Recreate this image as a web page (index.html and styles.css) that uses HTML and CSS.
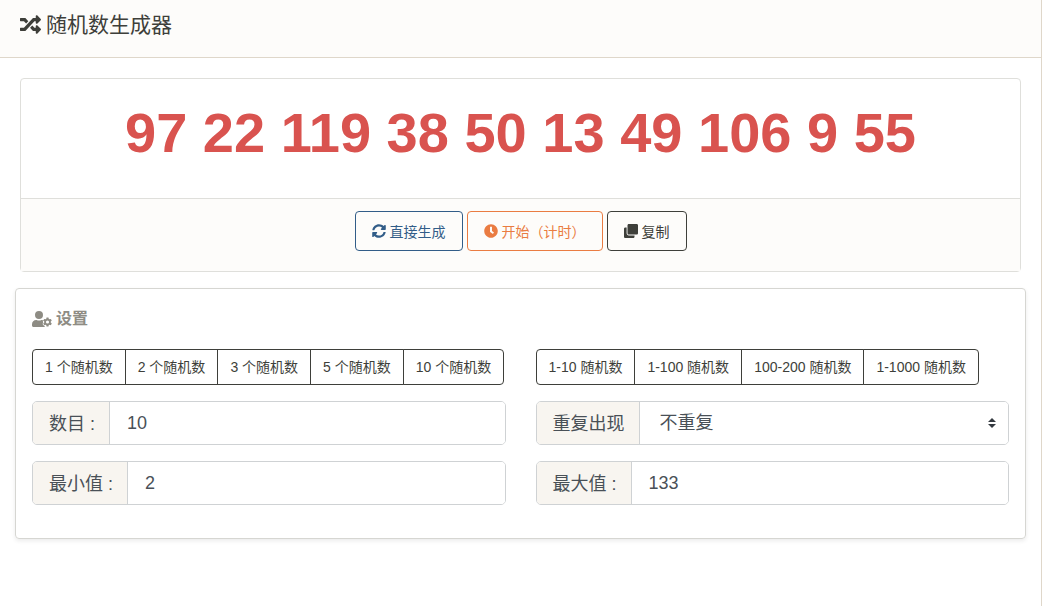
FILE: index.html
```html
<!DOCTYPE html>
<html lang="zh-CN">
<head>
    <meta charset="UTF-8">
    <meta name="viewport" content="width=device-width, initial-scale=1.0">
    <title>随机数生成器</title>
    <link rel="stylesheet" href="styles.css">
</head>
<body>
    <main class="panel">
        <h1 class="panel-header">
            <svg class="icon" viewBox="0 0 512 512" aria-hidden="true"><path d="M504.971 359.029c9.373 9.373 9.373 24.569 0 33.941l-80 79.984c-15.01 15.01-40.971 4.49-40.971-16.971V416h-58.785a12.004 12.004 0 0 1-8.773-3.812l-70.556-75.596 53.333-57.143L352 336h32v-39.981c0-21.438 25.943-31.998 40.971-16.971l80 79.981zM12 176h84l52.781 56.551 53.333-57.143-70.556-75.596A11.999 11.999 0 0 0 122.785 96H12c-6.627 0-12 5.373-12 12v56c0 6.627 5.373 12 12 12zm372 0v39.984c0 21.46 25.961 31.98 40.971 16.971l80-79.984c9.373-9.373 9.373-24.569 0-33.941l-80-79.981C409.943 24.021 384 34.582 384 56.019V96h-58.785a12.004 12.004 0 0 0-8.773 3.812L96 336H12c-6.627 0-12 5.373-12 12v56c0 6.627 5.373 12 12 12h110.785c3.326 0 6.503-1.381 8.773-3.812L352 176h32z"/></svg>
            随机数生成器
        </h1>

        <section class="result">
            <div class="numbers" id="numbers">97 22 119 38 50 13 49 106 9 55</div>
            <div class="actions">
                <button type="button" class="btn btn-primary">
                    <svg class="icon" viewBox="0 0 512 512" aria-hidden="true"><path d="M370.72 133.28C339.458 104.008 298.888 87.962 255.848 88c-77.458.068-144.328 53.178-162.791 126.85-1.344 5.363-6.122 9.15-11.651 9.15H24.103c-7.498 0-13.194-6.807-11.807-14.176C33.933 94.924 134.813 8 256 8c66.448 0 126.791 26.136 171.315 68.685L463.03 40.97C478.149 25.851 504 36.559 504 57.941V192c0 13.255-10.745 24-24 24H345.941c-21.382 0-32.09-25.851-16.971-40.971l41.75-41.749zM32 296h134.059c21.382 0 32.09 25.851 16.971 40.971l-41.75 41.75c31.262 29.273 71.835 45.319 114.876 45.28 77.418-.07 144.315-53.144 162.787-126.849 1.344-5.363 6.122-9.15 11.651-9.15h57.304c7.498 0 13.194 6.807 11.807 14.176C478.067 417.076 377.187 504 256 504c-66.448 0-126.791-26.136-171.315-68.685L48.97 471.03C33.851 486.149 8 475.441 8 454.059V320c0-13.255 10.745-24 24-24z"/></svg>
                    直接生成
                </button>
                <button type="button" class="btn btn-warning">
                    <svg class="icon" viewBox="0 0 512 512" aria-hidden="true"><path d="M256 8C119 8 8 119 8 256s111 248 248 248 248-111 248-248S393 8 256 8zm57.1 350.1L224.9 294c-3.1-2.3-4.9-5.9-4.9-9.7V116c0-6.6 5.4-12 12-12h48c6.6 0 12 5.4 12 12v137.7l63.5 46.2c5.4 3.9 6.5 11.4 2.6 16.8l-28.2 38.8c-3.9 5.3-11.4 6.5-16.8 2.6z"/></svg>
                    开始（计时）
                </button>
                <button type="button" class="btn btn-dark">
                    <svg class="icon" viewBox="0 0 512 512" aria-hidden="true"><path d="M464 0c26.51 0 48 21.49 48 48v288c0 26.51-21.49 48-48 48H176c-26.51 0-48-21.49-48-48V48c0-26.51 21.49-48 48-48h288M176 416c-44.112 0-80-35.888-80-80V128H48c-26.51 0-48 21.49-48 48v288c0 26.51 21.49 48 48 48h288c26.51 0 48-21.49 48-48v-48H176z"/></svg>
                    复制
                </button>
            </div>
        </section>

        <section class="settings">
            <h2 class="settings-title">
                <svg class="icon icon-wide" viewBox="0 0 640 512" aria-hidden="true"><path fill-rule="evenodd" d="M224 256a128 128 0 1 0 0-256 128 128 0 0 0 0 256zM314 288h-13a174 174 0 0 1-154 0h-13C60 288 0 348 0 422v42c0 27 21 48 48 48h370c-12-7-18-21-16-36l-34-20c-24-14-34-45-17-73l7-14c-18-22-10-50 12-64-12-10-34-17-56-17zM465 208h62l8 43 26 15 41-14 31 53-33 29v36l33 29-31 53-41-14-26 15-8 43h-62l-8-43-26-15-41 14-31-53 33-29v-36l-33-29 31-53 41 14 26-15zM496 302a50 50 0 1 0 0 100 50 50 0 0 0 0-100z"/></svg>
                设置
            </h2>
            <form class="form-grid">
                <div class="btn-group">
                    <button type="button">1 个随机数</button>
                    <button type="button">2 个随机数</button>
                    <button type="button">3 个随机数</button>
                    <button type="button">5 个随机数</button>
                    <button type="button">10 个随机数</button>
                </div>
                <div class="btn-group">
                    <button type="button">1-10 随机数</button>
                    <button type="button">1-100 随机数</button>
                    <button type="button">100-200 随机数</button>
                    <button type="button">1-1000 随机数</button>
                </div>
                <div class="input-group">
                    <label for="count">数目 :</label>
                    <input type="text" id="count" value="10">
                </div>
                <div class="input-group">
                    <label for="repeat">重复出现</label>
                    <div class="select-wrap">
                        <select id="repeat">
                            <option selected>不重复</option>
                            <option>重复</option>
                        </select>
                        <svg class="select-arrow" viewBox="0 0 8 10" aria-hidden="true"><path d="M4 0L0 4h8zM4 10L0 6h8z"/></svg>
                    </div>
                </div>
                <div class="input-group">
                    <label for="min">最小值 :</label>
                    <input type="text" id="min" value="2">
                </div>
                <div class="input-group">
                    <label for="max">最大值 :</label>
                    <input type="text" id="max" value="133">
                </div>
            </form>
        </section>
    </main>
</body>
</html>
```
FILE: styles.css
```css
* {
    box-sizing: border-box;
}

body {
    margin: 0;
    font-family: "Liberation Sans", "Noto Sans CJK SC", sans-serif;
    font-size: 14px;
    color: #3e3f3a;
    background: #fff;
}

button, input, select {
    font-family: inherit;
    color: inherit;
    margin: 0;
}

.icon {
    width: 1em;
    height: 1em;
    fill: currentColor;
    flex: none;
}

.icon-wide {
    width: 20px;
}

.panel {
    min-height: 100vh;
    border-right: 1px solid #dfd7ca;
}

.panel-header {
    display: flex;
    align-items: center;
    gap: 5px;
    margin: 0;
    padding: 12px 20px 20px;
    font-size: 21px;
    line-height: 25px;
    font-weight: 400;
    background: #fdfcfa;
    border-bottom: 1px solid #dfd7ca;
}

.result {
    margin: 20px 20px 16px;
    border: 1px solid #dfdfdb;
    border-radius: 4px;
}

.numbers {
    padding: 20px 20px 31px;
    font-size: 56px;
    line-height: 68px;
    font-weight: bold;
    text-align: center;
    color: #d9534f;
}

.actions {
    display: flex;
    justify-content: center;
    gap: 4px;
    padding: 12px 20px 20px;
    background: #fdfcfa;
    border-top: 1px solid #dfdfdb;
}

.btn {
    display: flex;
    align-items: center;
    gap: 4px;
    height: 40px;
    padding: 0 16px 1px;
    font-size: 14px;
    background: transparent;
    border: 1px solid currentColor;
    border-radius: 4px;
    cursor: pointer;
}

.btn-primary {
    color: #325d88;
}

.btn-warning {
    color: #ea7c42;
}

.btn-dark {
    color: #3e3f3a;
}

.settings {
    margin: 0 15px;
    padding: 17px 16px 33px;
    border: 1px solid #d6d6d2;
    border-radius: 4px;
    box-shadow: 0 2px 4px rgba(0, 0, 0, 0.08);
}

.settings-title {
    display: flex;
    align-items: center;
    gap: 4px;
    margin: 0 0 17px;
    font-size: 16px;
    line-height: 26px;
    font-weight: 600;
    color: #8e8c84;
}

.form-grid {
    display: grid;
    grid-template-columns: 1fr 1fr;
    gap: 16px 30px;
}

.btn-group {
    display: flex;
}

.btn-group button {
    height: 36px;
    padding: 0 12px 2px;
    font-size: 14px;
    white-space: nowrap;
    background: #fff;
    border: 1px solid #3e3f3a;
    cursor: pointer;
}

.btn-group button + button {
    margin-left: -1px;
}

.btn-group button:first-child {
    border-radius: 4px 0 0 4px;
}

.btn-group button:last-child {
    border-radius: 0 4px 4px 0;
}

.input-group {
    display: flex;
    height: 44px;
    font-size: 18px;
    color: #495057;
    border: 1px solid #cfd2d4;
    border-radius: 5px;
    overflow: hidden;
}

.input-group label {
    display: flex;
    align-items: center;
    padding: 0 14px 2px 16px;
    white-space: nowrap;
    background: #f8f5f0;
    border-right: 1px solid #cfd2d4;
}

.input-group input,
.input-group select {
    flex: 1;
    width: 100%;
    min-width: 0;
    height: 100%;
    padding: 0 17px;
    font-size: 18px;
    background: #fff;
    border: 0;
    outline: 0;
}

.select-wrap {
    position: relative;
    flex: 1;
}

.input-group select {
    padding: 0 32px 0 20px;
    appearance: none;
}

/* arrow sits over the select */
.select-arrow {
    position: absolute;
    top: 50%;
    right: 12px;
    width: 8px;
    height: 10px;
    margin-top: -5px;
    fill: #343a40;
    pointer-events: none;
}
```
